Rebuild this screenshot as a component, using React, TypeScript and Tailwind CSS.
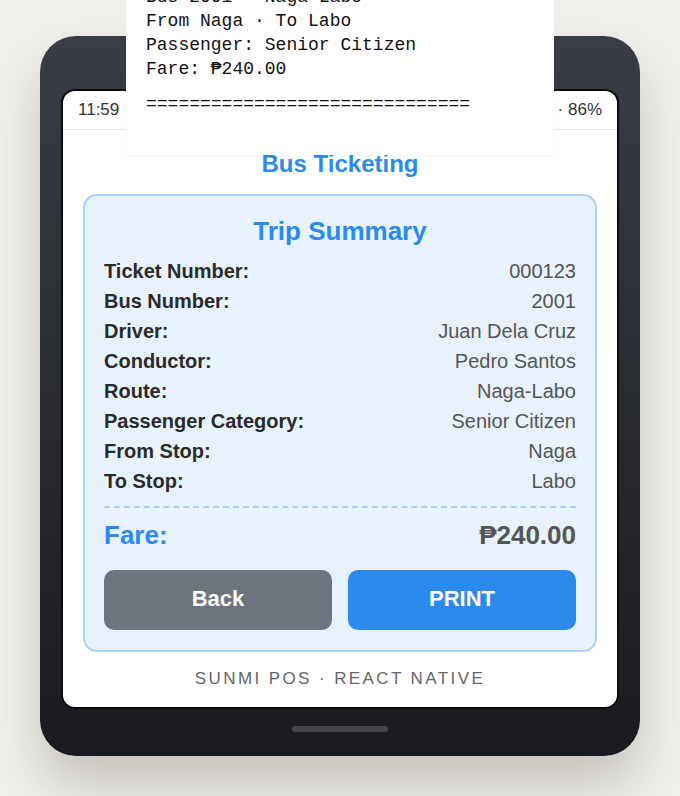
const rows: [string, string][] = [
  ["Ticket Number:", "000123"],
  ["Bus Number:", "2001"],
  ["Driver:", "Juan Dela Cruz"],
  ["Conductor:", "Pedro Santos"],
  ["Route:", "Naga-Labo"],
  ["Passenger Category:", "Senior Citizen"],
  ["From Stop:", "Naga"],
  ["To Stop:", "Labo"],
];

const receiptLines = [
  "Ticket #000123",
  "Bus 2001 · Naga-Labo",
  "From Naga · To Labo",
  "Passenger: Senior Citizen",
  "Fare: ₱240.00",
];

const sans = "font-['Liberation_Sans',Arial,sans-serif]";

function Receipt() {
  return (
    <div className="absolute left-[126px] bottom-[641px] w-[428px] bg-white px-5 pb-[39px] shadow-[0_1px_2px_rgba(0,0,0,0.06)] font-['Liberation_Mono',monospace] text-[18px] leading-[24px] text-[#111]">
      {receiptLines.map((line) => (
        <div key={line} className="whitespace-pre">
          {line}
        </div>
      ))}
      <div className="mt-[11px] whitespace-pre">==============================</div>
    </div>
  );
}

function StatusBar() {
  return (
    <div className="flex h-[39px] items-center justify-between border-b border-[#e4e4ea] px-[15px] text-[17px] text-[#333]">
      <span>11:59</span>
      <span>4G · 86%</span>
    </div>
  );
}

function TripSummary() {
  return (
    <div className="mx-5 mt-[15px] rounded-[14px] border-2 border-[#abd0f6] bg-[#e8f2fc] px-[19px] pt-[19px] pb-[20px]">
      <h2 className="text-center text-[26px] leading-[32px] font-bold text-[#2b8aeb]">
        Trip Summary
      </h2>
      <div className="mt-[9px]">
        {rows.map(([label, value]) => (
          <div
            key={label}
            className="flex h-[30px] items-center justify-between text-[20px]"
          >
            <span className="font-bold text-[#2a2a2a]">{label}</span>
            <span className="text-[#555]">{value}</span>
          </div>
        ))}
      </div>
      <div className="mt-[10px] border-t-2 border-dashed border-[#abd0f6]" />
      <div className="mt-[11px] flex items-center justify-between text-[26px] leading-[32px] font-bold">
        <span className="text-[#2b8aeb]">Fare:</span>
        <span className="text-[#555]">₱240.00</span>
      </div>
      <div className="mt-[19px] grid grid-cols-2 gap-4">
        <button className="h-[60px] rounded-[10px] bg-[#6c757d] pb-[3px] text-[22px] font-bold text-white">
          Back
        </button>
        <button className="h-[60px] rounded-[10px] bg-[#2b8aeb] pb-[3px] text-[22px] font-bold text-white">
          PRINT
        </button>
      </div>
    </div>
  );
}

export default function App() {
  return (
    <div
      className={`relative flex h-[796px] w-[680px] justify-center overflow-hidden bg-[#f0efeb] pt-[36px] ${sans}`}
    >
      <div className="flex h-[720px] w-[600px] flex-col rounded-[36px] bg-gradient-to-b from-[#3a3d46] to-[#1a1b1f] px-[21px] pt-[53px] shadow-[0_30px_50px_rgba(60,50,30,0.22)]">
        <div className="h-[620px] overflow-hidden rounded-[14px] border-2 border-[#0b0b0d] bg-white">
          <StatusBar />
          <h1 className="pt-[19px] text-center text-[24px] leading-[30px] font-bold text-[#2b8aeb]">
            Bus Ticketing
          </h1>
          <TripSummary />
          <p className="mt-[15px] text-center text-[17px] leading-[24px] tracking-[2.4px] text-[#666]">
            SUNMI POS · REACT NATIVE
          </p>
        </div>
        <div className="mx-auto mt-[17px] h-[6px] w-[96px] rounded-full bg-[#44464c]" />
      </div>
      <Receipt />
    </div>
  );
}
